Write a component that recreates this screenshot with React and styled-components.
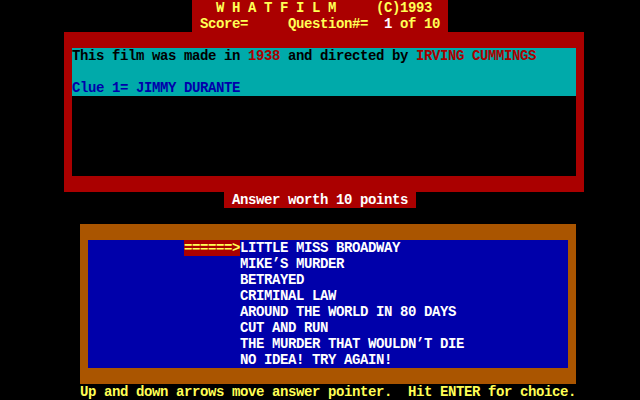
import React from 'react';
import styled, { createGlobalStyle } from 'styled-components';

const RED = '#aa0000';
const CYAN = '#00aaaa';
const BLUE = '#0000aa';
const BROWN = '#aa5500';
const YELLOW = '#ffff55';
const WHITE = '#ffffff';

const GlobalStyle = createGlobalStyle`
  html, body {
    margin: 0;
    padding: 0;
    background: #000;
  }
  body {
    font-family: "Liberation Mono", "DejaVu Sans Mono", monospace;
    font-weight: bold;
    font-size: 14px;
    letter-spacing: -0.4px;
    line-height: 16px;
  }
`;

const Screen = styled.div`
  width: 640px;
  height: 400px;
  background: #000;
  display: flex;
  flex-direction: column;
  overflow: hidden;
`;

const Line = styled.div`
  height: 16px;
  white-space: pre;
  color: ${p => p.color || YELLOW};
`;

const TitleBar = styled.div`
  margin-left: 192px;
  width: 256px;
  height: 32px;
  background: ${RED};
`;

const QuestionBox = styled.div`
  margin-left: 64px;
  width: 504px;
  padding: 16px 8px;
  background: ${RED};
`;

const CluePanel = styled.div`
  height: 48px;
  background: ${CYAN};
  color: #000;
`;

const EmptyPanel = styled.div`
  height: 80px;
  background: #000;
`;

const Hi = styled.span`
  color: ${p => p.color};
`;

const WorthTag = styled.div`
  margin-left: 224px;
  width: 192px;
  height: 16px;
  background: ${RED};
  color: ${WHITE};
  white-space: pre;
  margin-bottom: 16px;
`;

const ChoiceBox = styled.div`
  margin-left: 80px;
  width: 480px;
  padding: 16px 8px;
  background: ${BROWN};
`;

const ChoiceList = styled.div`
  height: 128px;
  background: ${BLUE};
`;

const ChoiceRow = styled.div`
  display: flex;
  height: 16px;
  padding-left: 96px;
  white-space: pre;
  color: ${WHITE};
`;

const Pointer = styled.span`
  width: 56px;
  flex: none;
  background: ${p => (p.active ? RED : 'transparent')};
  color: ${YELLOW};
`;

const Footer = styled.div`
  padding-left: 80px;
  height: 16px;
  white-space: pre;
  color: ${YELLOW};
`;

const choices = [
  'LITTLE MISS BROADWAY',
  "MIKE\u2019S MURDER",
  'BETRAYED',
  'CRIMINAL LAW',
  'AROUND THE WORLD IN 80 DAYS',
  'CUT AND RUN',
  "THE MURDER THAT WOULDN\u2019T DIE",
  'NO IDEA! TRY AGAIN!',
];

function App() {
  const selected = 0;
  return (
    <>
      <GlobalStyle />
      <Screen>
        <TitleBar>
          <Line>{'   W H A T F I L M     (C)1993'}</Line>
          <Line>
            {' Score=     Question#=  '}
            <Hi color={WHITE}>1</Hi>
            {' of 10'}
          </Line>
        </TitleBar>
        <QuestionBox>
          <CluePanel>
            <Line color="#000">
              {'This film was made in '}
              <Hi color={RED}>1938</Hi>
              {' and directed by '}
              <Hi color={RED}>IRVING CUMMINGS</Hi>
            </Line>
            <Line />
            <Line color={BLUE}>Clue 1= JIMMY DURANTE</Line>
          </CluePanel>
          <EmptyPanel />
        </QuestionBox>
        <WorthTag>{' Answer worth 10 points '}</WorthTag>
        <ChoiceBox>
          <ChoiceList>
            {choices.map((c, i) => (
              <ChoiceRow key={c}>
                <Pointer active={i === selected}>{i === selected ? '======>' : ''}</Pointer>
                {c}
              </ChoiceRow>
            ))}
          </ChoiceList>
        </ChoiceBox>
        <Footer>Up and down arrows move answer pointer.  Hit ENTER for choice.</Footer>
      </Screen>
    </>
  );
}

export default App;
